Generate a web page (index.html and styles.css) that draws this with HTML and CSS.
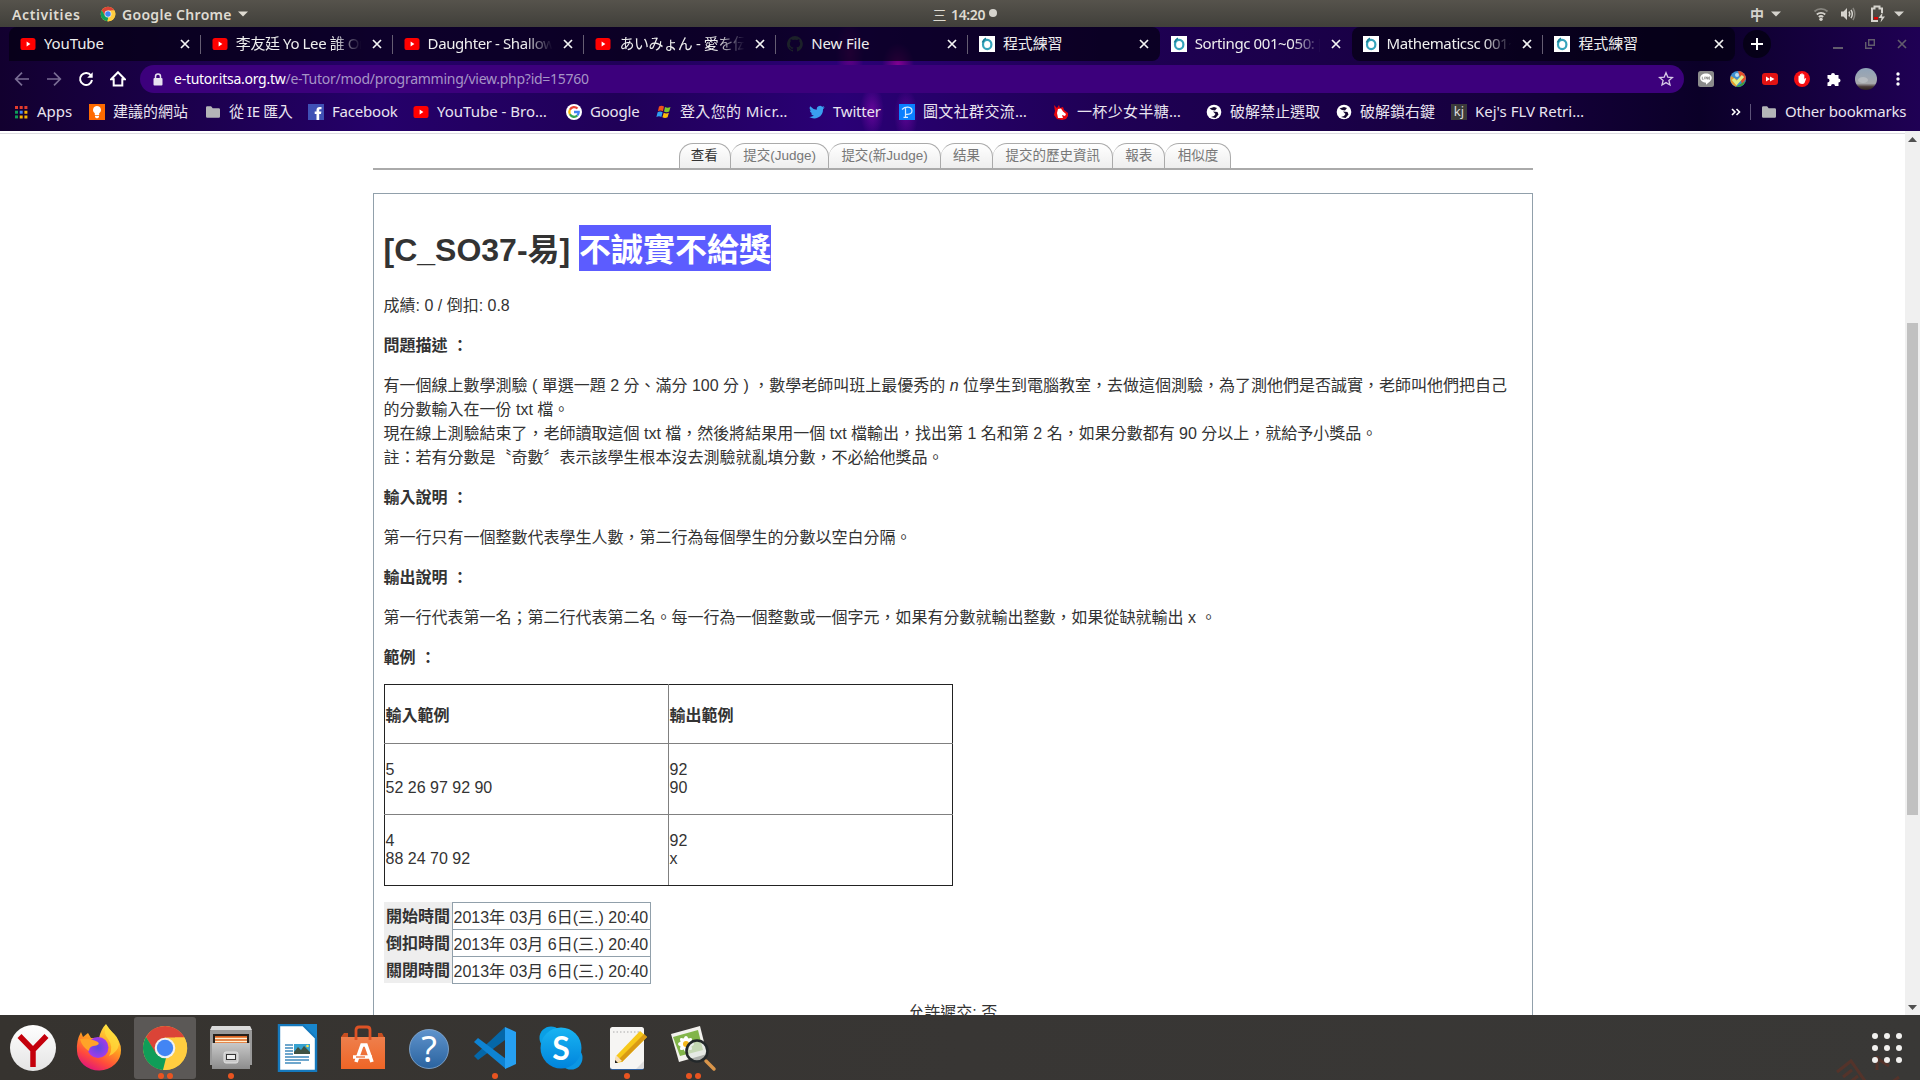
FILE: index.html
```html
<!DOCTYPE html>
<html lang="zh-TW">
<head>
<meta charset="utf-8">
<title>Sortingc 001~050</title>
<link rel="stylesheet" href="styles.css">
</head>
<body>
<svg class="defs" aria-hidden="true">
  <linearGradient id="gY" x1="0" y1="0" x2="0" y2="1"><stop offset="0" stop-color="#fff"/><stop offset="1" stop-color="#e4e4e4"/></linearGradient>
  <linearGradient id="gFox" x1=".8" y1="0" x2=".3" y2="1"><stop offset="0" stop-color="#fff04a"/><stop offset=".45" stop-color="#ff9a20"/><stop offset=".75" stop-color="#ff4a3c"/><stop offset="1" stop-color="#e0147c"/></linearGradient>
  <radialGradient id="gOrb"><stop offset="0" stop-color="#5a4be0"/><stop offset="1" stop-color="#a23be8"/></radialGradient>
  <linearGradient id="gCab" x1="0" y1="0" x2="0" y2="1"><stop offset="0" stop-color="#c8c8c8"/><stop offset="1" stop-color="#8c8c8c"/></linearGradient>
  <linearGradient id="gBag" x1="0" y1="0" x2="0" y2="1"><stop offset="0" stop-color="#ee7f4c"/><stop offset="1" stop-color="#ef6526"/></linearGradient>
  <linearGradient id="gHelp" x1="0" y1="0" x2="0" y2="1"><stop offset="0" stop-color="#5f93cc"/><stop offset="1" stop-color="#2a639f"/></linearGradient>
  <linearGradient id="gSky" x1="0" y1="0" x2="0" y2="1"><stop offset="0" stop-color="#19b4f2"/><stop offset="1" stop-color="#0084dc"/></linearGradient>
  <linearGradient id="gAv" x1="0" y1="0" x2="0" y2="1"><stop offset="0" stop-color="#8fa3b8"/><stop offset=".7" stop-color="#a8a9ad"/><stop offset=".85" stop-color="#4a3a38"/><stop offset="1" stop-color="#2a2020"/></linearGradient>
  <symbol id="yt" viewBox="0 0 16 16"><rect x="0.5" y="2" width="15" height="12" rx="2.6" fill="#f00"/><path d="M6.600 5.600 10.400 8l-3.800 2.400z" fill="#fff"/></symbol>
  <symbol id="gh" viewBox="0 0 16 16"><path fill="#1c2129" d="M8 0a8 8 0 0 0-2.500 15.600c.4.1.5-.2.5-.4v-1.400c-2.200.5-2.700-1-2.700-1-.4-.9-.9-1.200-.9-1.200-.7-.5.1-.5.1-.5.8.1 1.200.8 1.200.8.7 1.300 1.900.9 2.300.7.1-.5.3-.9.5-1.100-1.800-.2-3.600-.9-3.600-4 0-.9.3-1.600.8-2.100-.1-.2-.4-1 .1-2.100 0 0 .7-.2 2.200.8a7.500 7.500 0 0 1 4 0c1.500-1 2.200-.8 2.200-.8.4 1.100.2 1.900.1 2.100.5.6.8 1.300.8 2.100 0 3.100-1.900 3.700-3.700 3.900.3.300.6.8.6 1.500v2.200c0 .2.1.5.6.4A8 8 0 0 0 8 0z"/></symbol>
  <symbol id="etutor" viewBox="0 0 16 16"><rect width="16" height="16" fill="#fff"/><ellipse cx="8.200" cy="8.500" rx="4.200" ry="4.600" fill="none" stroke="#35a3bb" stroke-width="2.200"/><path d="M3.500 6.500Q4.500 3.500 7 2.200" fill="none" stroke="#177f96" stroke-width="1.800"/></symbol>
  <symbol id="x" viewBox="0 0 10 10"><path d="M1 1l8 8M9 1l-8 8" stroke="currentColor" stroke-width="1.700"/></symbol>
  <symbol id="chrome" viewBox="0 0 48 48"><circle cx="24" cy="24" r="22" fill="#ffcd40"/><path d="M24 2a22 22 0 0 1 19.500 11.500H24L14.500 29.500 5 13A22 22 0 0 1 24 2z" fill="#db4437"/><path d="M5 13l10.500 17 9.500 4-3 12A22 22 0 0 1 5 13z" fill="#0f9d58"/><path d="M22 46l11-17 1-15.500h9.500A22 22 0 0 1 22 46z" fill="#ffcd40"/><circle cx="24" cy="24" r="10.300" fill="#f1f1f1"/><circle cx="24" cy="24" r="8.200" fill="#4285f4"/></symbol>
  <symbol id="folder" viewBox="0 0 16 16"><path d="M1 3.500q0-1.200 1.200-1.200h3.900l1.600 1.900h6q1.300 0 1.300 1.200v7.100q0 1.200-1.200 1.200H2.200Q1 13.700 1 12.500z" fill="#b4b5b8"/></symbol>
  <symbol id="globe" viewBox="0 0 16 16"><circle cx="8" cy="8" r="7.300" fill="#fff"/><path d="M3.500 4.500 8 3l3 1-2 2.500-3-.5zM7 7.500l4.500.5 1 2.500-3 3.500-4.500-1 3-1 1.500-2z" fill="#14062e"/></symbol>
  <symbol id="down" viewBox="0 0 10 6"><path d="M0 .5h10L5 5.500z" fill="currentColor"/></symbol>
</svg>

<div class="desktop">
  <div class="topbar">
    <span class="activities">Activities</span>
    <span class="appmenu"><svg class="i16"><use href="#chrome"/></svg><span>Google Chrome</span><svg class="caret"><use href="#down"/></svg></span>
    <span class="clock"><span>三</span><span>14:20</span><i></i></span>
    <span class="tray">
      <span class="ime">中</span><svg class="caret"><use href="#down"/></svg>
      <svg class="wifi" viewBox="0 0 16 16" fill="none" stroke-width="1.800"><path d="M1.500 5.500a9.500 9.500 0 0 1 13 0" stroke="#86847e"/><path d="M3.800 8.500a6.200 6.200 0 0 1 8.400 0M5.800 11a3.200 3.200 0 0 1 4.400 0" stroke="#d5d3cd"/><circle cx="8" cy="13.300" r="1.700" fill="#d5d3cd"/></svg>
      <svg class="vol" viewBox="0 0 16 16" fill="none" stroke-width="1.500"><path d="M1 5.500h2.500L7 2v12l-3.500-3.500H1z" fill="#d5d3cd"/><path d="M9 5.500q1.500 2.500 0 5M11 3.800q2.600 4.200 0 8.400" stroke="#d5d3cd"/><path d="M13 2q3.500 6 0 12" stroke="#86847e"/></svg>
      <svg class="bat" viewBox="0 0 16 18" fill="none"><path d="M8 15.900H2V3.500h2.500v-2h5v2H12V8" stroke="#d5d3cd" stroke-width="2"/><path d="M4 12h4v2.500H4z" fill="#d00"/><path d="M12.500 7.500 8.500 13h3l-1 4.500 4.500-6h-3z" fill="#d5d3cd"/></svg>
      <svg class="caret"><use href="#down"/></svg>
    </span>
  </div>

  <div class="browser">
    <div class="tabs">
      <div class="tab"><svg class="i16"><use href="#yt"/></svg><span>YouTube</span><svg class="close"><use href="#x"/></svg></div>
      <div class="tab"><svg class="i16"><use href="#yt"/></svg><span class="fade tight">李友廷 Yo Lee 誰 One</span><svg class="close"><use href="#x"/></svg></div>
      <div class="tab"><svg class="i16"><use href="#yt"/></svg><span class="fade tight">Daughter - Shallows</span><svg class="close"><use href="#x"/></svg></div>
      <div class="tab"><svg class="i16"><use href="#yt"/></svg><span class="fade tight">あいみょん - 愛を伝え</span><svg class="close"><use href="#x"/></svg></div>
      <div class="tab"><svg class="i16"><use href="#gh"/></svg><span>New File</span><svg class="close"><use href="#x"/></svg></div>
      <div class="tab before"><svg class="i16"><use href="#etutor"/></svg><span>程式練習</span><svg class="close"><use href="#x"/></svg></div>
      <div class="tab active"><svg class="i16"><use href="#etutor"/></svg><span class="fade tight">Sortingc 001~050: [C</span><svg class="close"><use href="#x"/></svg></div>
      <div class="tab after"><svg class="i16"><use href="#etutor"/></svg><span class="fade tight">Mathematicsc 001~0</span><svg class="close"><use href="#x"/></svg></div>
      <div class="tab last"><svg class="i16"><use href="#etutor"/></svg><span>程式練習</span><svg class="close"><use href="#x"/></svg></div>
      <div class="newtab"><svg width="12" height="12" viewBox="0 0 12 12"><path d="M6 0v12M0 6h12" stroke="#fff" stroke-width="2"/></svg></div>
      <div class="winctl">
        <svg width="10" height="10" viewBox="0 0 10 10"><path d="M0 9h10" stroke="#625c6c" stroke-width="2"/></svg>
        <svg width="10" height="10" viewBox="0 0 10 10" fill="none" stroke="#625c6c" stroke-width="1.400"><path d="M3.700.7h5.600v5.600H3.700zM.7 3v6.300H7"/></svg>
        <svg width="10" height="10"><use href="#x"/></svg>
      </div>
    </div>

    <div class="toolbar">
      <div class="nav">
        <svg viewBox="0 0 16 16" class="dim"><path d="M15 8H2M8 1.700 1.700 8 8 14.300"/></svg>
        <svg viewBox="0 0 16 16" class="dim"><path d="M1 8h13M8 1.700 14.300 8 8 14.300"/></svg>
        <svg viewBox="0 0 16 16"><path d="M13 4.500A6 6 0 1 0 14 9"/><path d="M14.700 1.200v5.500H9.200z" fill="#fff" stroke="none"/></svg>
        <svg viewBox="0 0 16 16"><path d="M8 1.300 1.200 8.200h2.500v6.300h8.600V8.200h2.500z"/></svg>
      </div>
      <div class="omnibox">
        <svg class="lock" viewBox="0 0 10 13"><path d="M2.500 5.500V3.400a2.500 2.500 0 0 1 5 0v2.100" fill="none" stroke="#e8e2f0" stroke-width="1.500"/><rect x=".5" y="5" width="9" height="7.500" rx="1" fill="#e8e2f0"/></svg>
        <span class="url"><b>e-tutor.itsa.org.tw</b>/e-Tutor/mod/programming/view.php?id=15760</span>
        <svg class="star" viewBox="0 0 16 16"><path d="M8 1.800l1.800 4.300 4.600.4-3.500 3 1.100 4.500L8 11.600 4 14l1.100-4.500-3.500-3 4.600-.4z" fill="none" stroke="#d6c9e6" stroke-width="1.300"/></svg>
      </div>
      <div class="exts">
        <svg class="i16" viewBox="0 0 16 16"><rect width="16" height="16" rx="2.500" fill="#8b8b8b"/><path d="M8 2.500c3.300 0 5.800 2 5.800 4.600 0 2.400-3 4.600-5.800 6.600v-2C4.700 11.600 2.200 9.700 2.200 7.100 2.200 4.500 4.700 2.500 8 2.500z" fill="#fff"/><path d="M4.300 5.700v2.600h1.300M6.700 5.700v2.600M8 8.300V5.700l1.600 2.600V5.700M12 6h-1.200v2.200H12M10.800 7.100H12" fill="none" stroke="#777" stroke-width=".7"/></svg>
        <svg class="i16" viewBox="0 0 16 16"><circle cx="8" cy="8" r="8" fill="#3f8fd0"/><path d="M8 0a8 8 0 0 1 8 8l-4 5z" fill="#e2502c"/><path d="M1 5a8 8 0 0 0 5 10.700L9 10z" fill="#e89b2d"/><path d="M15.500 10A8 8 0 0 1 6 15.700z" fill="#3c9b3a"/><path d="M3 8l3.500 4L13 5" fill="none" stroke="#dff08a" stroke-width="3.200"/><circle cx="7" cy="4" r="2" fill="#b9dcf3"/></svg>
        <svg class="i16" viewBox="0 0 16 16"><rect y="2" width="16" height="12" rx="3" fill="#e21313"/><path d="M4 5.500 8 8l-4 2.500zM8 5.500 12.500 8 8 10.500z" fill="#fff"/></svg>
        <svg class="i16" viewBox="0 0 16 16"><circle cx="8" cy="8" r="8" fill="#f40d12"/><path d="M4.500 8.500V5.200q0-.8.700-.8t.7.800V3.700q0-.8.700-.8t.7.800V3q0-.8.700-.8t.8.800v.9q0-.7.700-.7t.8.800v4.500l.7-1.200q.9-.4 1.200.3L10.500 12q-.6 1-2.300 1Q5 13 4.500 10z" fill="#fff"/></svg>
        <svg class="i16" viewBox="0 0 16 16"><path d="M1.500 4H5a2 2 0 1 1 4 0h3.500v3.500a2 2 0 1 1 0 4V15H9a2 2 0 1 0-4 0H1.500v-3.500a2 2 0 1 0 0-4z" fill="#fff"/></svg>
        <svg class="avatar" viewBox="0 0 22 22"><circle cx="11" cy="11" r="11" fill="url(#gAv)"/><ellipse cx="8" cy="12" rx="5" ry="3" fill="#c4c8cc" opacity=".6"/></svg>
        <svg class="i16" viewBox="0 0 16 16" fill="#fff"><circle cx="8" cy="3" r="1.700"/><circle cx="8" cy="8" r="1.700"/><circle cx="8" cy="13" r="1.700"/></svg>
      </div>
    </div>

    <div class="bookmarks">
      <span class="bm"><svg class="i16" viewBox="0 0 16 16"><path d="M2 2h3v3H2z M6.700 2h3v3h-3z M11.400 2h3v3h-3z" fill="#e33b2e"/><path d="M2 6.700h3v3H2z" fill="#0f9d58"/><path d="M6.700 6.700h3v3h-3z" fill="#4285f4"/><path d="M11.400 6.700h3v3h-3z M6.700 11.400h3v3h-3z M11.400 11.400h3v3h-3z" fill="#f4b400"/><path d="M2 11.400h3v3H2z" fill="#0f9d58"/></svg><span>Apps</span></span>
      <span class="bm"><svg class="i16" viewBox="0 0 16 16"><rect width="16" height="16" fill="#ff6a00"/><path d="M8 2a4 4 0 0 1 2.200 7.300V11H5.800V9.300A4 4 0 0 1 8 2zM6 11.800h4v1.500L8 14.600l-2-1.300z" fill="#fff"/></svg><span>建議的網站</span></span>
      <span class="bm"><svg class="i16"><use href="#folder"/></svg><span class="ie">從 IE 匯入</span></span>
      <span class="bm"><svg class="i16" viewBox="0 0 16 16"><rect width="16" height="16" fill="#3f51b5"/><path d="M8.500 16V10H6.700V7.600h1.800V6c0-2 1.200-3 3-3H13.500v2.300h-1.200c-.9 0-1.100.4-1.100 1v1.300h2.200L13 10h-1.800v6z" fill="#fff"/></svg><span class="narrow">Facebook</span></span>
      <span class="bm"><svg class="i16"><use href="#yt"/></svg><span>YouTube - Bro…</span></span>
      <span class="bm"><svg class="i16" viewBox="0 0 16 16"><circle cx="8" cy="8" r="8" fill="#fff"/><g fill="none" stroke-width="2.300"><path d="M11.500 4.500A4.700 4.700 0 0 0 3.900 5.700" stroke="#ea4335"/><path d="M3.900 5.700a4.700 4.700 0 0 0 0 4.600" stroke="#fbbc05"/><path d="M3.900 10.300a4.700 4.700 0 0 0 7.400 1.200" stroke="#34a853"/><path d="M11.300 11.500A4.700 4.700 0 0 0 12.700 8H8" stroke="#4285f4"/></g></svg><span class="narrow">Google</span></span>
      <span class="bm"><svg class="i16" viewBox="0 0 16 16"><path d="M3 2.500q2.500-1.500 5 0L6.900 7.200q-2.400-1.400-5 0z" fill="#f1511b"/><path d="M9 3q2.500 1.500 5.500 0l-1.300 4.600q-2.700 1.500-5.200 0z" fill="#80cc28"/><path d="M1.600 8.200q2.500-1.400 5 0l-1.200 4.700q-2.400-1.400-5 0z" fill="#2f9ff0"/><path d="M7.700 8.700q2.500 1.500 5.200 0l-1.300 4.600q-2.600 1.500-5.200 0z" fill="#fbbc09"/></svg><span class="wide">登入您的 Micr…</span></span>
      <span class="bm"><svg class="i16" viewBox="0 0 16 16"><path d="M15.700 3.200q-.8.400-1.800.5.900-.6 1.300-1.700-.9.500-2 .8a3.200 3.200 0 0 0-5.400 2.900Q3.900 5.500 1.200 2.300A3.200 3.200 0 0 0 2.200 6.600Q1.500 6.600.8 6.200q0 2.500 2.500 3.200-.7.200-1.400 0 .7 2 3 2.200A6.400 6.400 0 0 1 .2 13Q4.600 15.600 9 13.600q5.100-2.500 5.100-8.700 1-.7 1.600-1.700z" fill="#3aa0f0"/></svg><span class="narrow">Twitter</span></span>
      <span class="bm"><svg class="i16" viewBox="0 0 16 16"><rect width="16" height="16" fill="#0a80ff"/><path d="M3 5.500Q5.500 3 9 3.200q4 .3 4 3.600 0 3.500-4.500 3.500H7M6.500 4v9.500M4.500 13.300h4.500" fill="none" stroke="#d8edff" stroke-width="1.200"/></svg><span class="wide">圖文社群交流…</span></span>
      <span class="bm"><svg class="i16" viewBox="0 0 16 16"><path d="M1 1l3 3 2-3 1 3 3-1 1 3 4 3v3l-2 3-4 1-5-1-3-4 1-4z" fill="#e8060e"/><path d="M5 5l3-.5 2 3 3 2.500-1 2-3-1 1 3H5L4 9z" fill="#fff"/></svg><span class="wide">一杯少女半糖…</span></span>
      <span class="bm"><svg class="i16"><use href="#globe"/></svg><span>破解禁止選取</span></span>
      <span class="bm"><svg class="i16"><use href="#globe"/></svg><span>破解鎖右鍵</span></span>
      <span class="bm"><i class="kj">kj</i><span>Kej's FLV Retri…</span></span>
      <span class="more"><svg width="10" height="8" viewBox="0 0 10 8" fill="none" stroke="#fff" stroke-width="1.600"><path d="M1 1l3 3-3 3M5.500 1l3 3-3 3"/></svg></span>
      <span class="bm other"><svg class="i16"><use href="#folder"/></svg><span class="narrow">Other bookmarks</span></span>
    </div>
  </div>

  <div class="viewport">
    <div class="page">
      <div class="pagetabs">
        <a class="on">查看</a><a>提交(Judge)</a><a>提交(新Judge)</a><a>结果</a><a>提交的歷史資訊</a><a>報表</a><a>相似度</a>
      </div>
      <div class="box">
        <h1>[C_SO37-易] <mark>不誠實不給獎</mark></h1>
        <p>成績: 0 / 倒扣: 0.8</p>
        <p><b>問題描述 ：</b></p>
        <p>有一個線上數學測驗 ( 單選一題 2 分、滿分 100 分 ) ，數學老師叫班上最優秀的 <em>n</em> 位學生到電腦教室，去做這個測驗，為了測他們是否誠實，老師叫他們把自己的分數輸入在一份 txt 檔。<br>現在線上測驗結束了，老師讀取這個 txt 檔，然後將結果用一個 txt 檔輸出，找出第 1 名和第 2 名，如果分數都有 90 分以上，就給予小獎品。<br>註：若有分數是〝奇數〞表示該學生根本沒去測驗就亂填分數，不必給他獎品。</p>
        <p><b>輸入說明 ：</b></p>
        <p>第一行只有一個整數代表學生人數，第二行為每個學生的分數以空白分隔。</p>
        <p><b>輸出說明 ：</b></p>
        <p>第一行代表第一名；第二行代表第二名。每一行為一個整數或一個字元，如果有分數就輸出整數，如果從缺就輸出 x 。</p>
        <p><b>範例 ：</b></p>
        <table class="sample">
          <tr class="head"><td><b>輸入範例</b></td><td><b>輸出範例</b></td></tr>
          <tr><td>5<br>52 26 97 92 90</td><td>92<br>90</td></tr>
          <tr><td>4<br>88 24 70 92</td><td>92<br>x</td></tr>
        </table>
        <div class="times">
          <b>開始時間</b><span>2013年 03月 6日(三.) 20:40</span>
          <b>倒扣時間</b><span>2013年 03月 6日(三.) 20:40</span>
          <b>關閉時間</b><span>2013年 03月 6日(三.) 20:40</span>
        </div>
        <p class="late">允許遲交: 否</p>
      </div>
    </div>
    <div class="scroll">
      <svg width="9" height="5" viewBox="0 0 9 5"><path d="M4.500 0 9 5H0z" fill="#505050"/></svg>
      <div class="track"><div class="thumb"></div></div>
      <svg width="9" height="5" viewBox="0 0 9 5"><path d="M0 0h9L4.500 5z" fill="#505050"/></svg>
    </div>
  </div>

  <div class="dock">
    <div class="app"><svg viewBox="0 0 48 48"><circle cx="24" cy="24" r="23" fill="url(#gY)"/><path d="M10.500 12 24 26 37.500 12M24 25v18" fill="none" stroke="#c4000c" stroke-width="5.500"/></svg></div>
    <div class="app"><svg viewBox="0 0 48 48"><path d="M31 0q3 5 7 9 8 8 8 17a22 20 0 0 1-44 1Q1 17 6 8l2 5 5-4 3 5h8q2-9 7-14z" fill="url(#gFox)"/><circle cx="23" cy="23.500" r="10.500" fill="url(#gOrb)"/><path d="M5 15q8-2 18 3 3 3-5 4-4 1-4 5-7-4-9-12z" fill="#ffa328"/><path d="M31 1q-3 8 2 14 6 8 1 17 9-4 10-12Q42 11 37 8z" fill="#ffdf3c" opacity=".7"/></svg></div>
    <div class="app focus"><svg viewBox="0 0 48 48"><use href="#chrome"/></svg><i></i><i></i></div>
    <div class="app"><svg viewBox="0 0 48 48"><path d="M5 2h38l2 5v34H3V7z" fill="#9a9a9a"/><path d="M5 2h38l2 4H3z" fill="#dadada"/><path d="M6 10h36v10H6z" fill="#25201c"/><path d="M8 12h32v8H8z" fill="#dd6420"/><path d="M8 14.500h32M8 17.500h32" stroke="#fff0d0" stroke-width="1.300"/><path d="M5 19h38v26H5z" fill="url(#gCab)"/><rect x="17" y="28" width="14" height="11" rx="2" fill="#c9c9c9" stroke="#e2e2e2"/><rect x="19.500" y="30.500" width="9" height="5" fill="#eee" stroke="#333"/></svg><i></i></div>
    <div class="app"><svg viewBox="0 0 48 48"><path d="M6 1h24l13 13v33H6z" fill="#fff" stroke="#1579bd" stroke-width="2.400"/><path d="M30 0h14v14z" fill="#1886cd"/><g stroke="#3f8bbd" stroke-width="1.300"><path d="M12 21h8M12 24h8M12 27h8M12 30h8M12 33h24M12 36h24M12 39h16"/></g><path d="M21 20h16v10H21z" fill="#37a2d0"/><path d="M21 28l4-5 3 3 3-4 6 6v2H21z" fill="#3f5343"/><circle cx="34.500" cy="22" r="1.300" fill="#ffe64a"/></svg></div>
    <div class="app"><svg viewBox="0 0 48 48"><path d="M5 9h4v4h30V9h4l3 6v30H2V13z" fill="#c74e20"/><path d="M2 13h44v32H2z" fill="url(#gBag)"/><path d="M17 16V6q0-3 3-3h8q3 0 3 3v10" fill="none" stroke="#dd5225" stroke-width="2.800"/><path d="M17 38l6-17h4l6 17M14 33h19" fill="none" stroke="#fff" stroke-width="3.600"/><path d="M17 33h9" stroke="#ed692e" stroke-width="1.300"/></svg></div>
    <div class="app"><svg viewBox="0 0 48 48"><circle cx="24" cy="25" r="19.500" fill="url(#gHelp)" stroke="#89afd7" stroke-width=".8"/><text x="24" y="37.500" text-anchor="middle" class="qmark">?</text></svg></div>
    <div class="app"><svg viewBox="0 0 48 48"><path d="M3 32 34 3v13L7 36z" fill="#0567a8"/><path d="M3 18 7 14 35 35v10z" fill="#0e83d3"/><path d="M34 3l11 5v32l-11 5z" fill="#26a0f2"/></svg><i></i></div>
    <div class="app"><svg viewBox="0 0 48 48"><circle cx="14" cy="14" r="11.500" fill="#0a9fe5"/><circle cx="34" cy="34" r="11.500" fill="#0b96e3"/><circle cx="24" cy="24" r="20.500" fill="url(#gSky)"/><text x="24" y="35.500" text-anchor="middle" class="skype">S</text></svg></div>
    <div class="app"><svg viewBox="0 0 48 48"><rect x="7" y="5" width="34" height="41" rx="2.500" fill="#2f5f9f"/><rect x="7" y="3" width="34" height="42" rx="2.500" fill="#f6f5f3"/><path d="M10 8h28" stroke="#aaa" stroke-dasharray="1.500 2"/><path d="M13 32 37 7l7 6-25 25-7 1z" fill="#f7c91b"/><path d="M16 35 41 10l3 3-25 25z" fill="#d99b14"/><path d="M13 31l6 6-7 2z" fill="#f8e0bd"/><path d="M12 36l3 3h-3z" fill="#222"/><path d="M33 45l8-8v6q0 2-2 2z" fill="#ddd"/></svg><i></i></div>
    <div class="app"><svg viewBox="0 0 48 48"><path d="M2 10 31 2l7 28-28 8z" fill="#f2f1ed"/><path d="M4 13 29 6l5 20-23 6z" fill="#82b54a"/><g fill="#fff"><ellipse cx="17" cy="20" rx="8" ry="3.200"/><ellipse cx="17" cy="20" rx="3.200" ry="8"/><ellipse cx="17" cy="20" rx="8" ry="3" transform="rotate(45 17 20)"/><ellipse cx="17" cy="20" rx="8" ry="3" transform="rotate(-45 17 20)"/></g><circle cx="17" cy="20" r="3" fill="#f5b71c"/><path d="M37 37l8 8" stroke="#d9954a" stroke-width="3.500" stroke-linecap="round"/><circle cx="28" cy="27" r="10.500" fill="#dfe6e0" fill-opacity=".7" stroke="#23282a" stroke-width="2.600"/></svg><i></i><i></i></div>
    <svg class="glow" viewBox="0 0 70 36" fill="none" stroke="#6b3022" stroke-width="3" opacity=".55"><path d="M2 19 16 8l14 20M8 24l9-7M14 30l9-7M24 34l6-5M40 4l14 9M42 3v14M52 33l12-9"/></svg>
    <svg class="grid" viewBox="0 0 30 30" fill="#f2f1ef"><circle cx="3" cy="3" r="3"/><circle cx="15" cy="3" r="3"/><circle cx="27" cy="3" r="3"/><circle cx="3" cy="15" r="3"/><circle cx="15" cy="15" r="3"/><circle cx="27" cy="15" r="3"/><circle cx="3" cy="27" r="3"/><circle cx="15" cy="27" r="3"/><circle cx="27" cy="27" r="3"/></svg>
  </div>
</div>
</body>
</html>
```
FILE: styles.css
```css
* { box-sizing: border-box; }
body { margin: 0; }
svg { display: block; flex: none; }
.defs { position: absolute; width: 0; height: 0; }
.desktop {
  width: 1920px; height: 1080px; overflow: hidden;
  display: flex; flex-direction: column; background: #fff;
  font-family: "Noto Sans", "Noto Sans CJK TC", sans-serif;
}
.i16 { width: 16px; height: 16px; }
.caret { width: 10px; height: 6px; }

/* system bar */
.topbar {
  height: 27px; flex: none; display: grid; grid-template-columns: 88px 1fr auto 1fr;
  align-items: center; padding: 0 16px 0 12px;
  background: linear-gradient(#56534c, #403f3a);
  color: #dfdbd2; font-size: 14px; font-weight: 600; line-height: 27px;
}
.activities { letter-spacing: .6px; }
.appmenu { display: flex; align-items: center; gap: 6px; letter-spacing: .3px; }
.clock { display: flex; align-items: center; gap: 4px; padding-top: 1px; width: 67px; margin-right: 72px; white-space: nowrap; letter-spacing: -.4px; }
.clock span:first-child { font-weight: 400; margin-right: 1px; }
.clock i { width: 8px; height: 8px; margin-top: -3px; border-radius: 50%; background: #d5d3cd; flex: none; }
.tray { display: flex; align-items: center; justify-content: flex-end; color: #d5d3cd; }
.tray .ime { margin-right: 7px; }
.wifi { width: 16px; height: 16px; margin: 0 11px 0 32px; }
.vol { width: 16px; height: 16px; margin-right: 14px; }
.bat { width: 16px; height: 18px; margin-right: 8px; }

/* browser chrome */
.browser {
  height: 104px; flex: none; color: #e9e4f0;
  background:
    radial-gradient(ellipse 14px 34px at 850px 26px, rgba(150, 0, 150, .55), transparent),
    radial-gradient(ellipse 16px 22px at 898px 38px, rgba(170, 0, 160, .7), transparent),
    radial-gradient(ellipse 12px 26px at 872px 84px, rgba(140, 10, 180, .6), transparent),
    radial-gradient(ellipse 12px 26px at 906px 88px, rgba(140, 10, 180, .5), transparent),
    linear-gradient(90deg, #12002f 0, #25006a 380px, #200058 620px, #2a0076 840px, #1f0055 1100px, #16003e 1500px, #0b0028 1700px, #1f0054 1920px);
}
.tabs { height: 34px; display: flex; padding-left: 9px; }
.tab {
  position: relative; width: 191.8px; height: 34px; flex: none; display: flex; align-items: center;
  gap: 8px; padding: 0 11px; background: rgba(4, 0, 18, .72);
  font-size: 15px; letter-spacing: -.12px; color: #eee; white-space: nowrap;
}
.tab:first-child { border-radius: 8px 0 0 0; }
.tab span { flex: 1; min-width: 0; overflow: hidden; line-height: 24px; margin-top: -2px; }
.tab .tight { letter-spacing: -.4px; }
.tab .fade { -webkit-mask-image: linear-gradient(90deg, #000 76%, transparent 98%); mask-image: linear-gradient(90deg, #000 76%, transparent 98%); }
.tab::after { content: ""; position: absolute; right: 0; top: 8px; width: 1px; height: 19px; background: #655d72; }
.tab.active { background: none; }
.tab.before { border-radius: 0 8px 8px 0; }
.tab.after { border-radius: 8px 0 0 8px; }
.tab.last { border-radius: 0 8px 8px 0; }
.tab.before::after, .tab.active::after, .tab.last::after { display: none; }
.close { width: 10px; height: 10px; color: #f4f4f4; }
.newtab { width: 28px; height: 28px; margin: 3px 0 0 8px; border-radius: 50%; background: rgba(4, 0, 18, .8); display: grid; place-items: center; }
.winctl { margin-left: auto; display: flex; align-items: center; gap: 22px; padding-right: 13px; color: #625c6c; }
.toolbar { height: 36px; display: flex; align-items: center; padding-left: 6px; }
.nav { display: flex; width: 134px; }
.nav svg { width: 16px; height: 16px; margin: 0 8px; fill: none; stroke: #fff; stroke-width: 2; }
.nav .dim { stroke: #796c94; stroke-width: 1.7; }
.omnibox { width: 1544px; height: 28px; border-radius: 14px; background: #3c007c; display: flex; align-items: center; padding: 0 10px 0 13px; }
.lock { width: 10px; height: 13px; margin-right: 11px; }
.url { font-size: 14px; color: #a694c6; letter-spacing: -.26px; flex: 1; margin-top: -1px; }
.url b { font-weight: 400; color: #fff; }
.star { width: 16px; height: 16px; }
.exts { display: grid; grid-template-columns: repeat(7, 32px); justify-items: center; align-items: center; margin-left: 6px; }
.avatar { width: 22px; height: 22px; }
.bookmarks {
  height: 34px; display: grid; align-items: center; padding-left: 13px; padding-bottom: 5px;
  grid-template-columns: 76px 116px 103px 105px 153px 90px 153px 90px 154px 153px 130px 115px 271px 28px 1fr;
  font-size: 15px; line-height: 24px; white-space: nowrap;
}
.bm { display: flex; align-items: center; gap: 8px; }
.bm > span { margin-top: -2px; }
.bm .ie { letter-spacing: -.4px; }
.bm .narrow { letter-spacing: -.2px; }
.bm .wide { letter-spacing: .35px; }
.kj { width: 16px; height: 16px; background: #3a3a3a; color: #ddd; font: 13px/14px "Noto Sans", sans-serif; text-align: center; }
.more { padding-left: 9px; }
.other { border-left: 1px solid #5d5279; padding-left: 10px; height: 16px; }

/* page */
.viewport { height: 884px; flex: none; display: flex; overflow: hidden; }
.page {
  flex: 1; padding-left: 373px; border-top: 1px solid #fff;
  color: #333; font: 16px/24px "Liberation Sans", "Noto Sans CJK TC", sans-serif;
}
.page::before { content: ""; display: block; height: 1px; margin: 1px 0 9px -373px; background: #dcdce0; }
.pagetabs { width: 1160px; height: 27px; display: flex; justify-content: center; border-bottom: 2px solid #aaa; padding-left: 4px; }
.pagetabs a {
  height: 25px; padding: 0 12.2px; border: 1px solid #aaa; border-bottom: 0;
  border-left-width: 0;
  border-radius: 14px 14px 0 0; background: linear-gradient(#fff, #eee);
  font-size: 13.5px; line-height: 23px; color: #777; white-space: nowrap;
}
.pagetabs a:first-child { border-left-width: 1px; padding-left: 11.2px; }
.pagetabs .on { color: #333; }
.box { width: 1160px; height: 900px; margin-top: 23px; border: 1px solid #91a0ab; padding: 0 10px 0 9.5px; }
h1 { margin: 31px 0 23px; height: 46px; font-size: 32px; line-height: 44px; }
mark { background: #5c5cff; color: #fff; display: inline-block; height: 46px; padding-top: 3px; }
.box p { margin: 0 0 16px; }
.sample { width: 569px; margin-top: -2px; border-collapse: collapse; border: 1px solid #222; line-height: 18px; table-layout: fixed; }
.sample td { border: 1px solid #808080; padding: 0 1px; height: 71px; }
.sample .head td { height: 59px; padding-top: 4px; }
.sample tr:first-child td { border-top-color: #222; }
.sample tr:last-child td { border-bottom-color: #222; }
.sample td:first-child { border-left-color: #222; }
.sample td:last-child { border-right-color: #222; }
.times { width: 267px; margin: 16px 0 18px; display: grid; grid-template-columns: 68px 199px; grid-auto-rows: 27px; white-space: nowrap; background: linear-gradient(#eee, #eee) 0 0 / 68px 100% no-repeat; }
.times b { padding-left: 2.5px; line-height: 30px; }
.times span { border: 1px solid #91a0ab; border-bottom: 0; padding-left: 1px; line-height: 30px; }
.times span:last-child { height: 28px; border-bottom: 1px solid #91a0ab; }
.box .late { text-align: center; }
.scroll { width: 15px; background: #f0f0f0; display: flex; flex-direction: column; align-items: center; padding: 6px 0 5px; }
.track { flex: 1; width: 11px; padding-top: 181px; }
.thumb { height: 492px; background: #c1c1c1; }

/* dock */
.dock {
  position: relative; height: 65px; flex: none; display: flex; align-items: center;
  background: linear-gradient(90deg, #36332f, #383634 50%, #393836);
}
.app { position: relative; width: 62px; height: 62px; margin: 2px; border-radius: 3px; display: flex; justify-content: center; align-items: flex-end; gap: 3px; }
.app svg { position: absolute; left: 7px; top: 7px; width: 48px; height: 48px; }
.app i { width: 6px; height: 6px; border-radius: 50%; background: #e95420; }
.focus { background: #5b5856; }
.qmark { font: 36px "Noto Sans", sans-serif; fill: #fff; }
.skype { font: bold 32px Lato, sans-serif; fill: #fff; }
.glow { position: absolute; right: 15px; bottom: -12px; width: 70px; height: 42px; }
.grid { position: relative; width: 30px; height: 30px; margin: 0 18px 0 auto; }
```
